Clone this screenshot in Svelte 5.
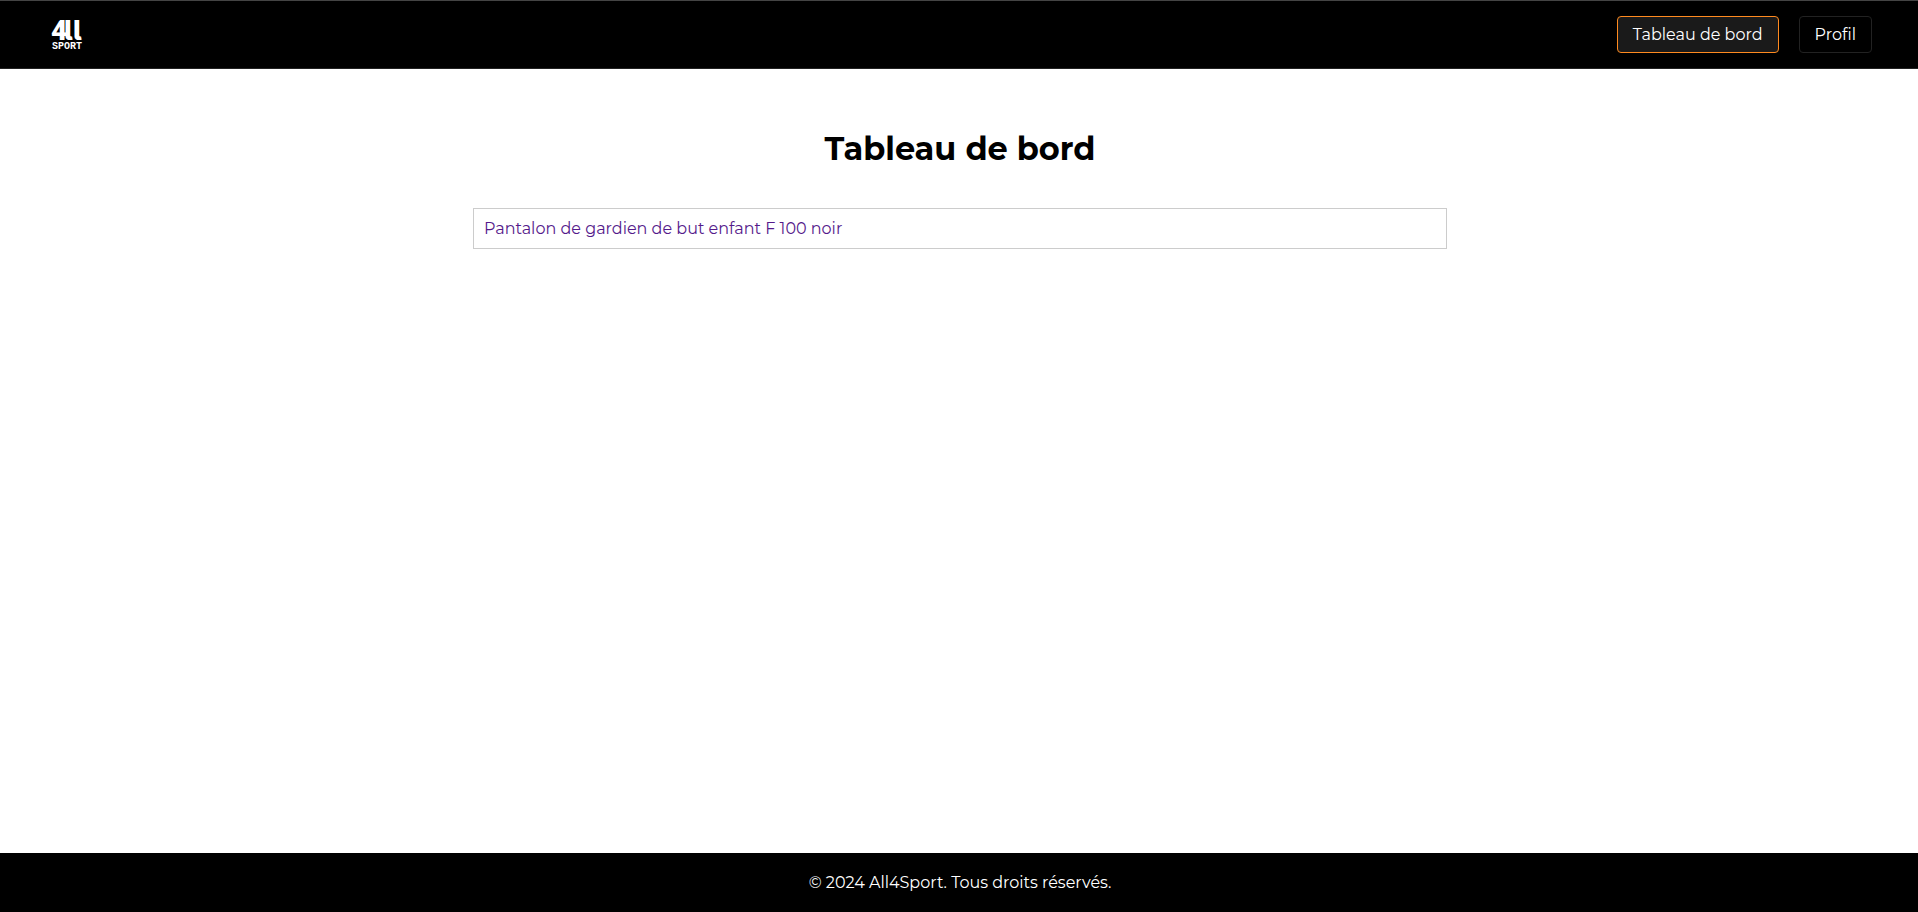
<script>
  const links = [
    { label: 'Tableau de bord', active: true },
    { label: 'Profil', active: false }
  ];
  const products = ['Pantalon de gardien de but enfant F 100 noir'];
</script>

<div class="page">
  <header>
    <a class="logo" href="#accueil" aria-label="4ll Sport">
      <svg viewBox="0 0 32 37" width="32" height="37">
        <text class="mark" y="24"><tspan class="four" x="0">4</tspan><tspan x="13 22">ll</tspan></text>
        <text class="word" x="1" y="33">SPORT</text>
      </svg>
    </a>
    <nav>
      {#each links as link}
        <a class="tab" class:active={link.active} href="#{link.label}">{link.label}</a>
      {/each}
    </nav>
  </header>

  <main>
    <h1>Tableau de bord</h1>
    <ul>
      {#each products as product}
        <li><a href="#produit">{product}</a></li>
      {/each}
    </ul>
  </main>

  <footer>© 2024 All4Sport. Tous droits réservés.</footer>
</div>

<style>
  :global(body) {
    margin: 0;
    background: #fff;
  }
  .page {
    display: flex;
    flex-direction: column;
    min-height: 100vh;
    font-family: Montserrat, Inter, sans-serif;
    font-size: 16px;
    line-height: 20px;
    color: #000;
  }
  header {
    display: flex;
    align-items: center;
    justify-content: space-between;
    padding: 15px 46px 15px 51px;
    background: #000;
    border-top: 1px solid #444;
    border-bottom: 1px solid #222;
  }
  .logo {
    display: flex;
  }
  .logo svg {
    overflow: visible;
  }
  .logo text {
    fill: #fff;
  }
  .mark {
    font: 800 27px Inter, sans-serif;
    font-feature-settings: 'cv05';
  }
  .four {
    font: 900 28px Roboto, sans-serif;
  }
  .word {
    font: 700 10px 'Liberation Mono', monospace;
  }
  nav {
    display: flex;
    gap: 20px;
  }
  .tab {
    padding: 8px 15px 7px;
    border: 1px solid #222;
    border-radius: 4px;
    color: #fff;
    text-decoration: none;
  }
  .tab.active {
    border-color: #ff8a1f;
    background: #1a1a1a;
  }
  main {
    flex: 1;
    padding: 60px 20px 60px 22px;
  }
  h1 {
    margin: 0 0 39px;
    font-size: 32px;
    font-weight: 700;
    line-height: 40px;
    text-align: center;
  }
  ul {
    max-width: 974px;
    box-sizing: border-box;
    margin: 0 auto;
    padding: 0;
    list-style: none;
  }
  li {
    padding: 10px;
    border: 1px solid #ccc;
    line-height: 19px;
  }
  li a {
    color: #551a8b;
    text-decoration: none;
  }
  footer {
    padding: 20px 20px 20px 22px;
    background: #000;
    color: #fff;
    line-height: 19px;
    text-align: center;
  }
</style>
